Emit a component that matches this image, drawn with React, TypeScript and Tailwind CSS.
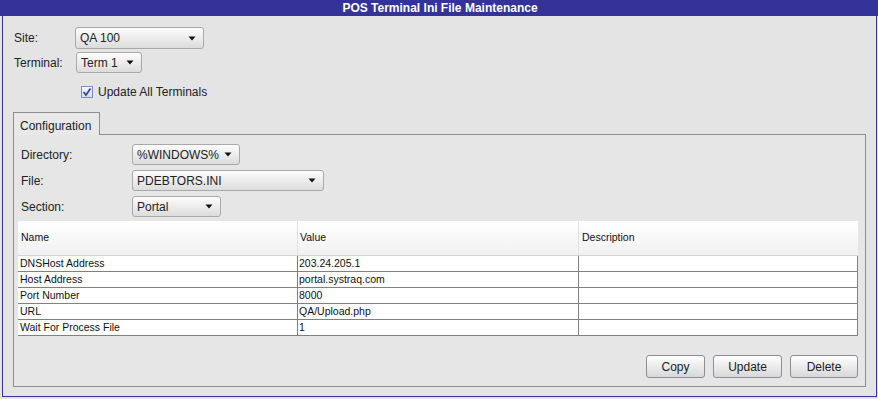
import React from "react"

const rows = [
  { name: "DNSHost Address", value: "203.24.205.1", desc: "" },
  { name: "Host Address", value: "portal.systraq.com", desc: "" },
  { name: "Port Number", value: "8000", desc: "" },
  { name: "URL", value: "QA/Upload.php", desc: "" },
  { name: "Wait For Process File", value: "1", desc: "" },
]

function Arrow() {
  return (
    <svg width="8" height="5" viewBox="0 0 8 5" className="shrink-0">
      <path d="M0.5 0.5 L7.5 0.5 L4 4.5 Z" fill="#111" />
    </svg>
  )
}

function Combo({ text, w, h }: { text: string; w: string; h: string }) {
  return (
    <div
      className={`${w} ${h} flex items-center justify-between pl-[4px] pr-[7px] rounded-[3px] border border-[#a9a9a9] bg-gradient-to-b from-[#fdfdfd] to-[#dcdcdc] text-[12px] text-[#222]`}
    >
      <span>{text}</span>
      <Arrow />
    </div>
  )
}

function Btn({ label, w }: { label: string; w: string }) {
  return (
    <button
      type="button"
      className={`${w} h-[23px] rounded-[3px] border border-[#8d8d9c] bg-gradient-to-b from-[#fefefe] to-[#d8d8d8] text-[12px] text-[#222]`}
    >
      {label}
    </button>
  )
}

export default function App() {
  return (
    <div className="w-[878px] h-[399px] bg-[#e4e4e4] overflow-hidden font-['Liberation_Sans',Arial,sans-serif]">
      {/* title bar */}
      <div className="h-[16px] bg-[#333399] text-white font-bold text-[12px] leading-[16px] text-center pl-[2px]">
        POS Terminal Ini File Maintenance
      </div>

      <div className="ml-[2px] w-[875px] h-[381px] border-l border-r border-b border-[#333399]">
        {/* site / terminal */}
        <div className="pt-[11px] pl-[11px] text-[12px] text-[#222]">
          <div className="flex items-center h-[22px]">
            <span className="w-[61px]">Site:</span>
            <Combo text="QA 100" w="w-[129px]" h="h-[22px]" />
          </div>
          <div className="flex items-center h-[21px] mt-[3px]">
            <span className="w-[62px]">Terminal:</span>
            <Combo text="Term 1" w="w-[66px]" h="h-[21px]" />
          </div>
          <div className="flex items-center h-[16px] mt-[11px] pl-[67px]">
            <div className="w-[12px] h-[12px] border border-[#7d8fb8] bg-gradient-to-b from-[#f4f6fa] to-[#d6dbe6] flex items-center justify-center">
              <svg width="10" height="10" viewBox="0 0 10 10">
                <path d="M1.5 5 L4 8 L8.5 1.5" stroke="#3b4b8e" strokeWidth="1.8" fill="none" />
              </svg>
            </div>
            <span className="ml-[5px]">Update All Terminals</span>
          </div>
        </div>

        {/* tab */}
        <div className="ml-[10px] mt-[12px]">
          <div className="relative -mb-px w-[87px] h-[23px] border-t border-l border-r border-[#8e8e8e] bg-[#e8e8e8] text-[12px] text-[#222] pl-[6px] pt-[4px]">
            Configuration
          </div>
          <div className="w-[853px] h-[253px] border border-[#8e8e8e] bg-[#e6e6e6]">
            <div className="pt-[9px] pl-[7px] text-[12px] text-[#222]">
              <div className="flex items-center h-[21px]">
                <span className="w-[111px]">Directory:</span>
                <Combo text="%WINDOWS%" w="w-[108px]" h="h-[21px]" />
              </div>
              <div className="flex items-center h-[21px] mt-[5px]">
                <span className="w-[111px]">File:</span>
                <Combo text="PDEBTORS.INI" w="w-[192px]" h="h-[21px]" />
              </div>
              <div className="flex items-center h-[21px] mt-[5px]">
                <span className="w-[111px]">Section:</span>
                <Combo text="Portal" w="w-[89px]" h="h-[21px]" />
              </div>
            </div>

            {/* table */}
            <div className="ml-[4px] mt-[4px] w-[840px] text-[10.5px] text-[#111]">
              <div className="grid grid-cols-[280px_281px_1fr] h-[35px] bg-gradient-to-b from-[#ffffff] to-[#f1f1f1] border-b border-[#d4d4d4]">
                <div className="flex items-center pl-[3px] border-r border-[#e2e2e2]">Name</div>
                <div className="flex items-center pl-[2px] border-r border-[#e2e2e2]">Value</div>
                <div className="flex items-center pl-[3px]">Description</div>
              </div>
              {rows.map((r) => (
                <div key={r.name} className="grid grid-cols-[280px_281px_1fr] h-[16px] bg-white">
                  <div className="pl-[2px] leading-[15px] border-r border-b border-[#808080]">{r.name}</div>
                  <div className="pl-[1px] leading-[15px] border-r border-b border-[#808080]">{r.value}</div>
                  <div className="pl-[2px] leading-[15px] border-r border-b border-[#808080]">{r.desc}</div>
                </div>
              ))}
            </div>

            {/* buttons */}
            <div className="flex justify-end gap-[8px] mt-[19px] pr-[7px]">
              <Btn label="Copy" w="w-[59px]" />
              <Btn label="Update" w="w-[69px]" />
              <Btn label="Delete" w="w-[68px]" />
            </div>
          </div>
        </div>
      </div>
    </div>
  )
}
